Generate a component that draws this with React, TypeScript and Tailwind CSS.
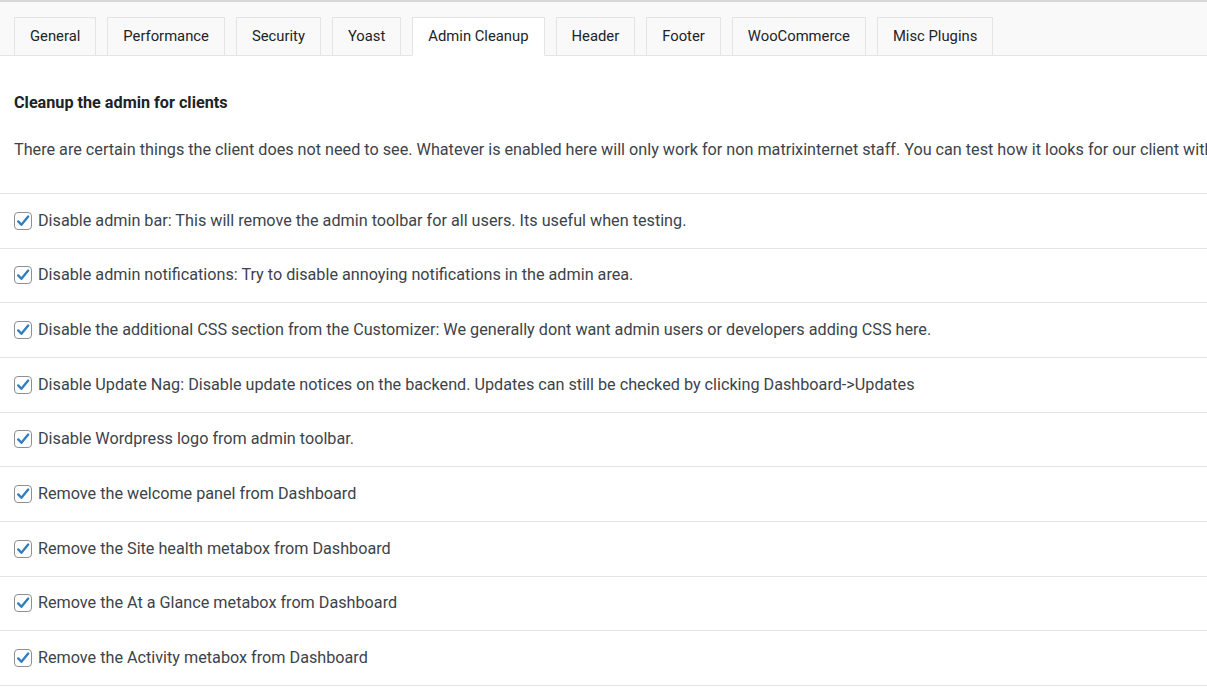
import { useState } from "react";

const tabs = [
  "General",
  "Performance",
  "Security",
  "Yoast",
  "Admin Cleanup",
  "Header",
  "Footer",
  "WooCommerce",
  "Misc Plugins",
];

const options = [
  "Disable admin bar: This will remove the admin toolbar for all users. Its useful when testing.",
  "Disable admin notifications: Try to disable annoying notifications in the admin area.",
  "Disable the additional CSS section from the Customizer: We generally dont want admin users or developers adding CSS here.",
  "Disable Update Nag: Disable update notices on the backend. Updates can still be checked by clicking Dashboard->Updates",
  "Disable Wordpress logo from admin toolbar.",
  "Remove the welcome panel from Dashboard",
  "Remove the Site health metabox from Dashboard",
  "Remove the At a Glance metabox from Dashboard",
  "Remove the Activity metabox from Dashboard",
];

function Check({ checked, onClick }: { checked: boolean; onClick: () => void }) {
  return (
    <button
      type="button"
      onClick={onClick}
      className="flex items-center justify-center w-[18px] h-[18px] shrink-0 rounded-[4px] border border-[#8c8f94] bg-white"
    >
      {checked && (
        <svg width="16" height="16" viewBox="0 0 20 20">
          <path d="M4 10.5l4 4.2L16.5 4.5" fill="none" stroke="#2f7fc1" strokeWidth="3" strokeLinecap="round" strokeLinejoin="round" />
        </svg>
      )}
    </button>
  );
}

export default function App() {
  const [active, setActive] = useState("Admin Cleanup");
  const [checked, setChecked] = useState(options.map(() => true));

  return (
    <main className="w-[1207px] h-[698px] overflow-hidden bg-white text-[#3c434a] text-[16.2px] font-['Roboto',sans-serif]">
      {/* Tabs */}
      <div className="border-t-2 border-[#d6d6d6] bg-[#f9f9f9] border-b border-b-[#e4e4e4] h-[56px] flex items-end gap-[11px] pl-[14px]">
        {tabs.map((t) => (
          <button
            key={t}
            onClick={() => setActive(t)}
            className={`h-[39px] -mb-px px-[15px] border border-[#e4e4e4] text-[14.8px] text-[#1d2327] ${
              active === t ? "bg-white border-b-white" : "bg-[#f9f9f9]"
            }`}
          >
            {t}
          </button>
        ))}
      </div>

      <h2 className="font-bold text-[#1d2327] pl-[14px] mt-[37px] leading-[20px]">Cleanup the admin for clients</h2>
      <p className="pl-[14px] mt-[27px] leading-[20px] whitespace-nowrap">
        There are certain things the client does not need to see. Whatever is enabled here will only work for non matrixinternet staff. You can test how it looks for our client with a test account.
      </p>

      <div className="mt-[33px]">
        {options.map((o, i) => (
          <div key={i} className="h-[54.67px] border-t border-[#e4e4e4] flex items-center gap-[6px] pl-[14px] whitespace-nowrap">
            <Check
              checked={checked[i]}
              onClick={() => setChecked(checked.map((c, j) => (j === i ? !c : c)))}
            />
            <span>{o}</span>
          </div>
        ))}
        <div className="border-t border-[#e4e4e4]" />
      </div>
    </main>
  );
}
